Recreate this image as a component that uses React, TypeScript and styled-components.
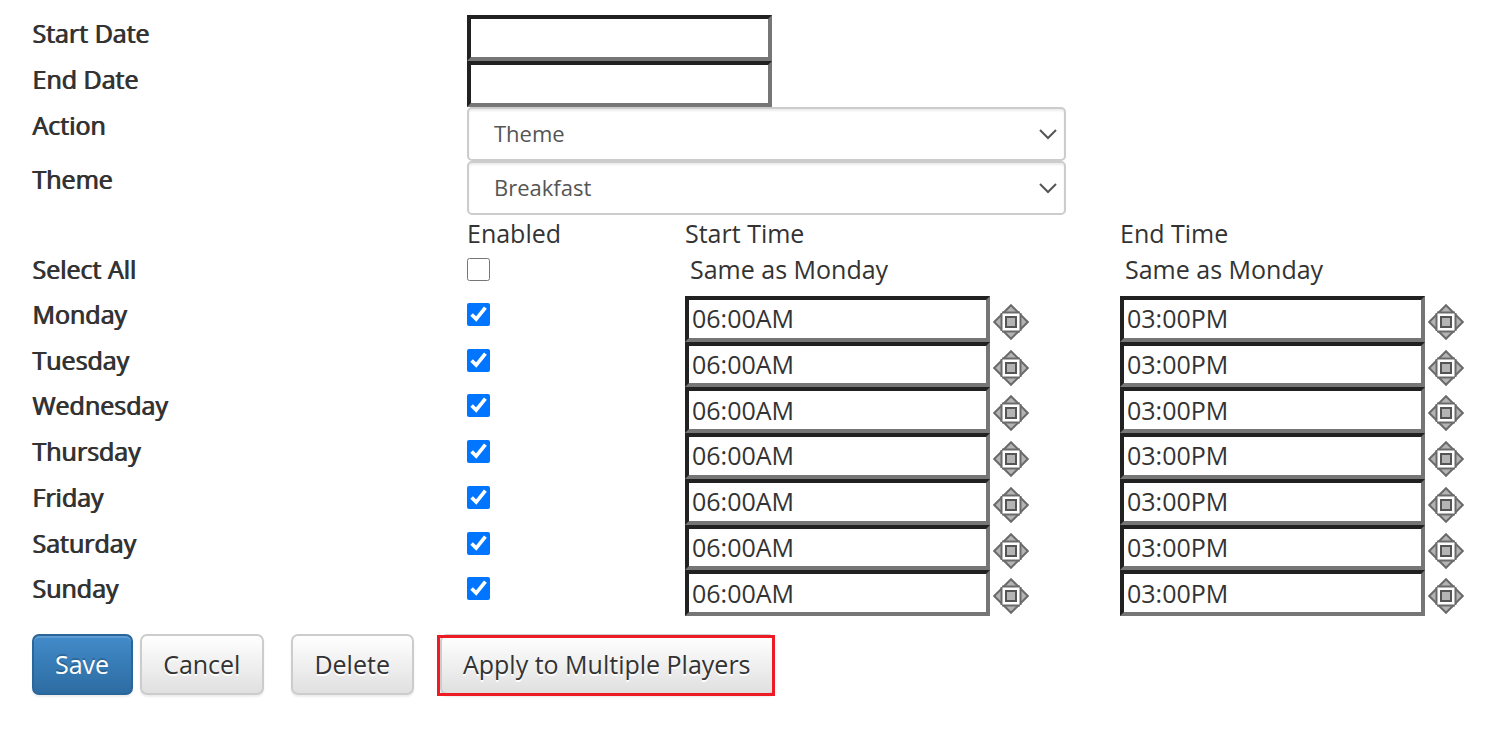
import React, { useState } from 'react';
import styled, { createGlobalStyle, css } from 'styled-components';

const GlobalStyle = createGlobalStyle`
  * { box-sizing: border-box; }
  body {
    margin: 0;
    background: #fff;
    color: #333;
    font-family: "Open Sans", sans-serif;
    font-size: 25px;
    line-height: 36px;
  }
`;

const columns = css`
  display: grid;
  grid-template-columns: 435fr 218fr 435fr 350fr;
`;

const boldLabel = css`
  font-weight: 400;
  text-shadow: 1px 0 0 #333;
`;

const Form = styled.form`
  padding: 15px 32px 32px;
`;

const FieldRow = styled.div<{ $tall?: boolean }>`
  ${columns}
  min-height: ${({ $tall }) => ($tall ? 54 : 46)}px;
`;

const FieldLabel = styled.label`
  ${boldLabel}
`;

const FieldControl = styled.div`
  grid-column: 2 / 4;
  display: flex;
`;

const TextBox = styled.input`
  width: 305px;
  height: 100%;
  padding: 0 3px 1px;
  border: 4px solid;
  border-color: #212121 #767676 #767676 #212121;
  background: #fff;
  color: #333;
  font: inherit;
`;

const SelectWrap = styled.div`
  position: relative;
  width: 599px;
  height: 54px;
`;

const Select = styled.select`
  appearance: none;
  width: 100%;
  height: 100%;
  padding: 0 48px 2px 25px;
  border: 2px solid #ccc;
  border-radius: 5px;
  background: #fff;
  box-shadow: inset 0 2px 2px rgba(0, 0, 0, 0.08);
  color: #555;
  font: inherit;
  font-size: 22px;
`;

const Chevron = styled.svg`
  position: absolute;
  top: 21px;
  right: 8px;
  pointer-events: none;
`;

const Schedule = styled.table`
  display: block;
`;

const Head = styled.thead`
  display: block;
`;

const HeadRow = styled.tr`
  ${columns}
`;

const AllRow = styled.tr`
  ${columns}
  height: 45px;
`;

const Days = styled.tbody`
  display: grid;
  grid-auto-rows: 1fr;
  height: 320px;
`;

const DayRow = styled.tr`
  ${columns}
  min-height: 0;
`;

const ColumnHeading = styled.th`
  padding: 0;
  text-align: left;
  font-weight: 400;
`;

const RowHeading = styled.th`
  ${boldLabel}
  padding: 0;
  text-align: left;
`;

const Cell = styled.td`
  display: flex;
  align-items: stretch;
  padding: 0;
`;

const TickBox = styled.input`
  width: 23px;
  height: 23px;
  margin: 7px 0 0;
`;

const SameLink = styled.a`
  padding-left: 5px;
  color: inherit;
  text-decoration: none;
`;

const SpinButton = styled.button`
  display: block;
  width: 36px;
  height: 36px;
  margin: 8px 0 0 3px;
  padding: 0;
  border: 0;
  background: none;
  align-self: start;
`;

const Actions = styled.div`
  display: flex;
  margin-top: 18px;
`;

const Button = styled.button<{ $primary?: boolean; $gap?: number }>`
  height: 61px;
  margin-left: ${({ $gap = 0 }) => $gap}px;
  padding: 0 22px 2px 21px;
  border: 2px solid ${({ $primary }) => ($primary ? '#2b669a' : '#ccc')};
  border-radius: 7px;
  background: ${({ $primary }) =>
    $primary
      ? 'linear-gradient(#428bca, #2d6ca2)'
      : 'linear-gradient(#fff, #e0e0e0)'};
  box-shadow: inset 0 2px 0 rgba(255, 255, 255, 0.15), 0 2px 2px rgba(0, 0, 0, 0.075);
  color: ${({ $primary }) => ($primary ? '#fff' : '#333')};
  text-shadow: ${({ $primary }) => ($primary ? '0 -2px 0 rgba(0, 0, 0, 0.2)' : '0 2px 0 #fff')};
  font: inherit;
  white-space: nowrap;
`;

const Highlighted = styled.div`
  position: relative;
  margin-left: 26px;

  &::after {
    content: "";
    position: absolute;
    inset: 1px 0 -1px -3px;
    border: 3px solid #ed1c24;
    pointer-events: none;
  }
`;

const DAYS = ['Monday', 'Tuesday', 'Wednesday', 'Thursday', 'Friday', 'Saturday', 'Sunday'];

function SpinnerIcon() {
  return (
    <svg width="36" height="36" viewBox="0 0 36 36" aria-hidden="true">
      <path d="M18 1.2 34.8 18 18 34.8 1.2 18Z" fill="#b4b4b4" stroke="#6a6a6a" strokeWidth="2" />
      <path d="M9 7.5H27V10H9ZM9 26H27V28.5H9ZM7.5 9H10V27H7.5ZM26 9H28.5V27H26Z" fill="#6a6a6a" />
      <rect x="9.5" y="9.5" width="17" height="17" fill="#fff" />
      <rect x="13" y="13" width="10" height="10" fill="#b4b4b4" stroke="#555" strokeWidth="2" />
    </svg>
  );
}

function DropDown({ id, options }: { id: string; options: string[] }) {
  return (
    <SelectWrap>
      <Select id={id}>
        {options.map((o) => (
          <option key={o}>{o}</option>
        ))}
      </Select>
      <Chevron width="19" height="13" viewBox="0 0 19 13" fill="none" stroke="#555" strokeWidth="2">
        <path d="M1 2 9 10 17 2" />
      </Chevron>
    </SelectWrap>
  );
}

function TimeCell({ label, initial }: { label: string; initial: string }) {
  const [value, setValue] = useState(initial);
  return (
    <Cell>
      <TextBox type="text" aria-label={label} value={value} onChange={(e) => setValue(e.target.value)} />
      <SpinButton type="button" aria-label={`Adjust ${label}`}>
        <SpinnerIcon />
      </SpinButton>
    </Cell>
  );
}

export default function App() {
  return (
    <>
      <GlobalStyle />
      <Form onSubmit={(e) => e.preventDefault()}>
        <FieldRow>
          <FieldLabel htmlFor="start-date">Start Date</FieldLabel>
          <FieldControl><TextBox id="start-date" type="text" /></FieldControl>
        </FieldRow>
        <FieldRow>
          <FieldLabel htmlFor="end-date">End Date</FieldLabel>
          <FieldControl><TextBox id="end-date" type="text" /></FieldControl>
        </FieldRow>
        <FieldRow $tall>
          <FieldLabel htmlFor="action">Action</FieldLabel>
          <FieldControl><DropDown id="action" options={['Theme']} /></FieldControl>
        </FieldRow>
        <FieldRow $tall>
          <FieldLabel htmlFor="theme">Theme</FieldLabel>
          <FieldControl><DropDown id="theme" options={['Breakfast']} /></FieldControl>
        </FieldRow>

        <Schedule>
          <Head>
            <HeadRow>
              <td />
              <ColumnHeading scope="col">Enabled</ColumnHeading>
              <ColumnHeading scope="col">Start Time</ColumnHeading>
              <ColumnHeading scope="col">End Time</ColumnHeading>
            </HeadRow>
            <AllRow>
              <RowHeading scope="row"><label htmlFor="all-days">Select All</label></RowHeading>
              <Cell><TickBox id="all-days" type="checkbox" /></Cell>
              <Cell><SameLink href="#start">Same as Monday</SameLink></Cell>
              <Cell><SameLink href="#end">Same as Monday</SameLink></Cell>
            </AllRow>
          </Head>
          <Days>
            {DAYS.map((day) => (
              <DayRow key={day}>
                <RowHeading scope="row"><label htmlFor={day}>{day}</label></RowHeading>
                <Cell><TickBox id={day} type="checkbox" defaultChecked /></Cell>
                <TimeCell label={`${day} start time`} initial="06:00AM" />
                <TimeCell label={`${day} end time`} initial="03:00PM" />
              </DayRow>
            ))}
          </Days>
        </Schedule>

        <Actions>
          <Button type="submit" $primary>Save</Button>
          <Button type="button" $gap={7}>Cancel</Button>
          <Button type="button" $gap={27}>Delete</Button>
          <Highlighted>
            <Button type="button">Apply to Multiple Players</Button>
          </Highlighted>
        </Actions>
      </Form>
    </>
  );
}
